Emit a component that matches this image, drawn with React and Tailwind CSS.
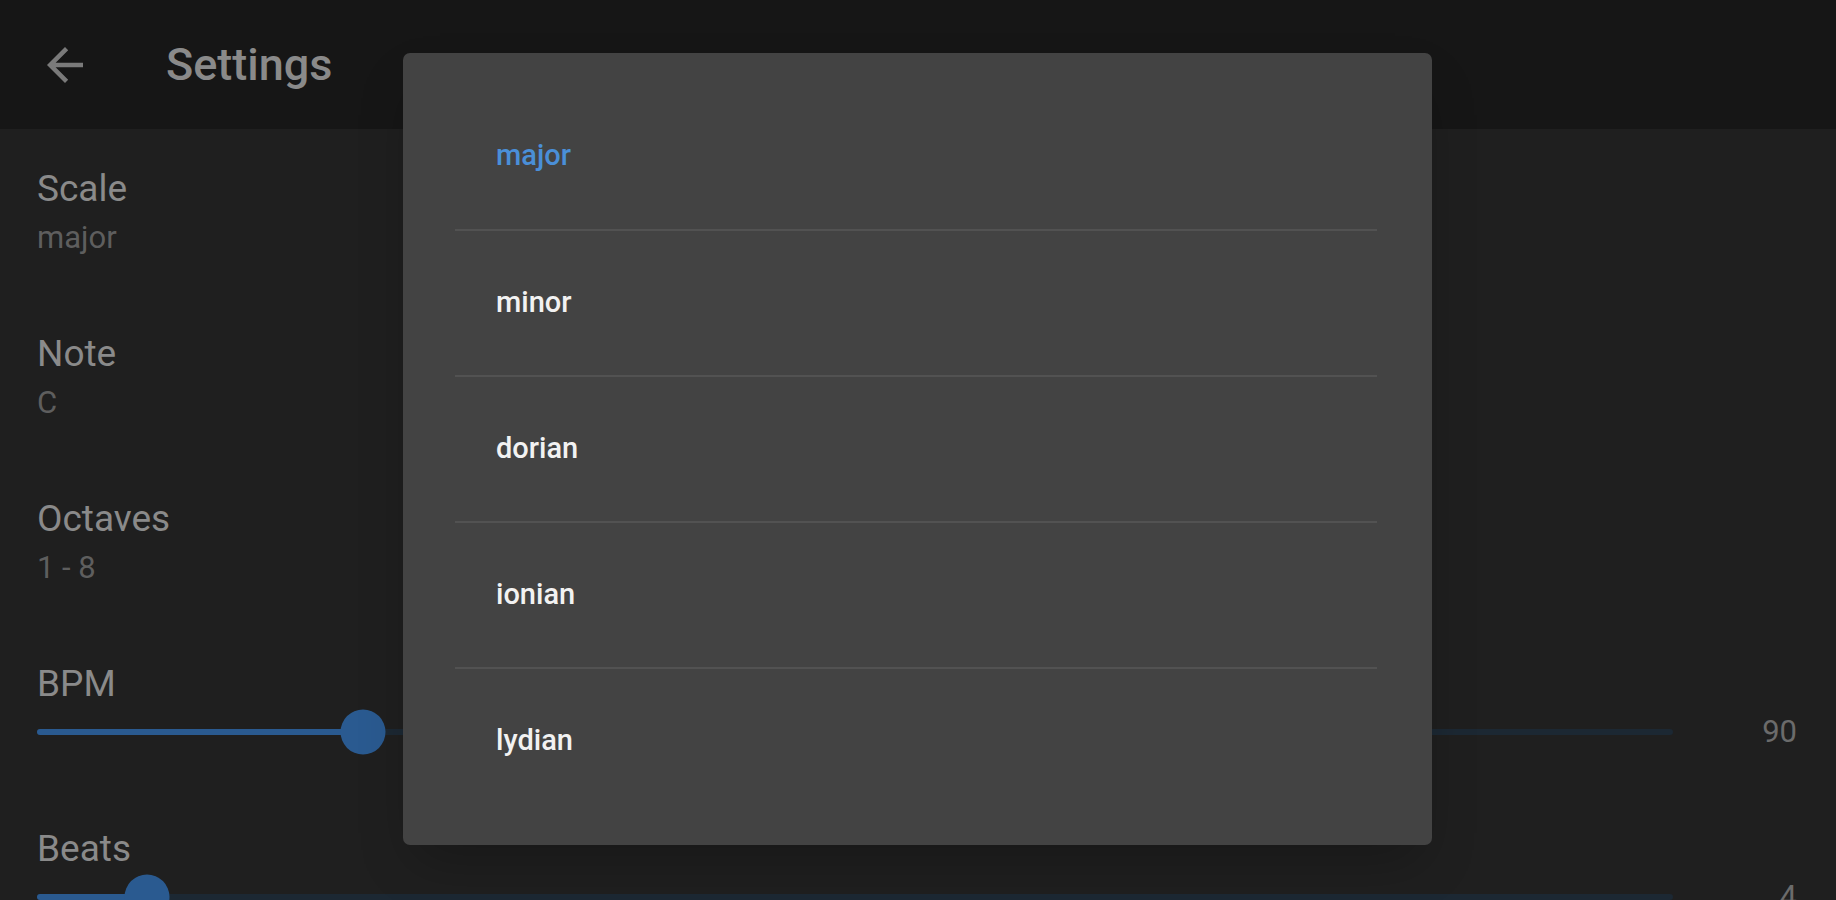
import React from 'react';

const settings = [
  { title: 'Scale', value: 'major' },
  { title: 'Note', value: 'C' },
  { title: 'Octaves', value: '1 - 8' },
];

const sliders = [
  { title: 'BPM', value: '90', pct: 19.9 },
  { title: 'Beats', value: '4', pct: 6.7 },
];

const scales = ['major', 'minor', 'dorian', 'ionian', 'lydian'];

const SliderRow = ({ title, value, pct }) => (
  <div className="h-[165px]">
    <div className="text-[37px] leading-[40px] text-[#8a8a8a]">{title}</div>
    <div className="mt-[5px] flex h-[46px] items-center">
      <div className="relative h-[6px] flex-1 rounded-full bg-[#1c2833]">
        <div
          className="absolute left-0 top-0 h-full rounded-full bg-[#2a5a90]"
          style={{ width: `${pct}%` }}
        />
        <div
          className="absolute top-1/2 h-[45px] w-[45px] -translate-x-1/2 -translate-y-1/2 rounded-full bg-[#2a5a90]"
          style={{ left: `${pct}%` }}
        />
      </div>
      <div className="w-[124px] text-right text-[31px] text-[#6b6b6b]">{value}</div>
    </div>
  </div>
);

export default function App() {
  return (
    <div
      className="relative h-[900px] w-[1836px] overflow-hidden bg-[#1f1f1f]"
      style={{ fontFamily: 'Roboto, "Liberation Sans", sans-serif' }}
    >
      {/* Toolbar */}
      <div className="flex h-[129px] items-center bg-[#161616]">
        <div className="ml-[38px] flex h-[54px] w-[54px] items-center justify-center">
          <svg viewBox="0 0 24 24" className="h-[54px] w-[54px]" fill="#7a7a7a">
            <path d="M20 11H7.83l5.59-5.59L12 4l-8 8 8 8 1.41-1.41L7.83 13H20v-2z" />
          </svg>
        </div>
        <h1 className="ml-[74px] text-[45px] font-medium text-[#8a8a8a]">Settings</h1>
      </div>

      {/* Settings list */}
      <div className="pl-[37px] pr-[39px] pt-[40px]">
        {settings.map((s) => (
          <div key={s.title} className="h-[165px]">
            <div className="text-[37px] leading-[40px] text-[#8a8a8a]">{s.title}</div>
            <div className="mt-3 text-[31px] leading-[34px] text-[#5e5e5e]">{s.value}</div>
          </div>
        ))}
        {sliders.map((s) => (
          <SliderRow key={s.title} {...s} />
        ))}
      </div>

      {/* Scale dialog */}
      <div className="absolute left-[403px] top-[53px] h-[792px] w-[1029px] rounded-[7px] bg-[#434343] py-[30px] shadow-2xl">
        <div className="ml-[52px] mr-[55px]">
          {scales.map((name, i) => (
            <div
              key={name}
              className={`flex h-[146px] items-center pl-[41px] text-[29px] font-medium ${
                i > 0 ? 'border-t-2 border-[#525252]' : ''
              } ${i === 0 ? 'text-[#4a8fd8]' : 'text-[#f2f2f2]'}`}
            >
              {name}
            </div>
          ))}
        </div>
      </div>
    </div>
  );
}
